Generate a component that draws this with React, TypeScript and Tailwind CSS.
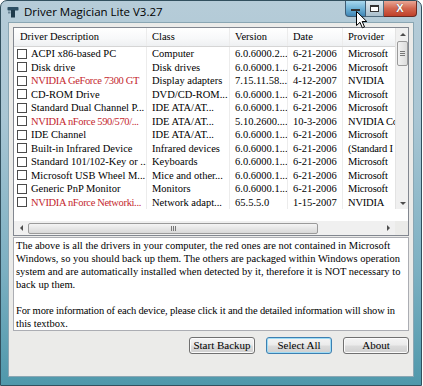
import { FC } from "react";

interface Driver {
  d: string;
  c: string;
  v: string;
  t: string;
  p: string;
  red?: boolean;
}

const drivers: Driver[] = [
  { d: "ACPI x86-based PC", c: "Computer", v: "6.0.6000.2...", t: "6-21-2006", p: "Microsoft" },
  { d: "Disk drive", c: "Disk drives", v: "6.0.6000.1...", t: "6-21-2006", p: "Microsoft" },
  { d: "NVIDIA GeForce 7300 GT", c: "Display adapters", v: "7.15.11.58...", t: "4-12-2007", p: "NVIDIA", red: true },
  { d: "CD-ROM Drive", c: "DVD/CD-ROM...", v: "6.0.6000.1...", t: "6-21-2006", p: "Microsoft" },
  { d: "Standard Dual Channel P...", c: "IDE ATA/AT...", v: "6.0.6000.1...", t: "6-21-2006", p: "Microsoft" },
  { d: "NVIDIA nForce 590/570/...", c: "IDE ATA/AT...", v: "5.10.2600....", t: "10-3-2006", p: "NVIDIA Co", red: true },
  { d: "IDE Channel", c: "IDE ATA/AT...", v: "6.0.6000.1...", t: "6-21-2006", p: "Microsoft" },
  { d: "Built-in Infrared Device", c: "Infrared devices", v: "6.0.6000.1...", t: "6-21-2006", p: "(Standard I" },
  { d: "Standard 101/102-Key or ...", c: "Keyboards", v: "6.0.6000.1...", t: "6-21-2006", p: "Microsoft" },
  { d: "Microsoft USB Wheel M...", c: "Mice and other...", v: "6.0.6000.1...", t: "6-21-2006", p: "Microsoft" },
  { d: "Generic PnP Monitor", c: "Monitors", v: "6.0.6000.1...", t: "6-21-2006", p: "Microsoft" },
  { d: "NVIDIA nForce Networki...", c: "Network adapt...", v: "65.5.5.0", t: "1-15-2007", p: "NVIDIA", red: true },
];

const Cell: FC<{ w: string; children: React.ReactNode; className?: string }> = ({ w, children, className }) => (
  <div className={`${w} shrink-0 overflow-hidden whitespace-nowrap border-r border-[#ececec] pl-[5px] ${className ?? ""}`}>
    {children}
  </div>
);

const Btn: FC<{ label: string; focused?: boolean }> = ({ label, focused }) => (
  <button
    className={`h-[17px] w-[66px] rounded-[3px] border bg-[linear-gradient(180deg,#f4f4f4_0%,#ebebeb_48%,#dcdcdc_52%,#cfcfcf_100%)] text-[11px] leading-none text-black ${
      focused ? "border-[#3c7fb1] shadow-[inset_0_0_0_1px_#9fdcf5]" : "border-[#707070] shadow-[inset_0_0_0_1px_#fbfbfb]"
    }`}
  >
    {label}
  </button>
);

const ScrollArrow: FC<{ dir: "up" | "down" | "left" | "right" }> = ({ dir }) => {
  const pts = {
    up: "2,6 5,3 8,6",
    down: "2,4 5,7 8,4",
    left: "6,2 3,5 6,8",
    right: "4,2 7,5 4,8",
  }[dir];
  return (
    <div className="flex h-[13px] w-[13px] shrink-0 items-center justify-center">
      <svg width="10" height="10" viewBox="0 0 10 10">
        <polygon points={pts} fill="#4d4d4d" />
      </svg>
    </div>
  );
};

export default function App() {
  return (
    <div className="relative h-[386px] w-[423px] overflow-hidden bg-white font-['Liberation_Serif',serif]">
      <div className="flex h-[386px] w-[422px] flex-col rounded-t-[7px] border border-[#32505e] bg-[linear-gradient(180deg,#b6ccd8_0%,#a9c6d4_30%,#7cb0c2_70%,#4f98ab_100%)]">
        {/* title bar */}
        <div className="relative flex h-[21px] shrink-0 items-center pl-[6px]">
          <svg width="12" height="12" viewBox="0 0 12 12" className="mr-[5px]">
            <rect x="0.5" y="1" width="11" height="3.5" rx="0.8" fill="#2c4f63" />
            <rect x="4" y="4" width="4" height="7.5" fill="#1f3b4b" />
            <rect x="1" y="5.5" width="2.5" height="2" fill="#6c8797" />
          </svg>
          <span className="font-['Open_Sans',sans-serif] text-[11.5px] leading-none text-black">
            Driver Magician Lite V3.27
          </span>
          <div className="ml-auto mr-[4px] flex self-start">
            <div className="flex h-[16px] w-[21px] items-center justify-center rounded-bl-[4px] border border-t-0 border-[#3e5c74] bg-[linear-gradient(180deg,#a9d8ee_0%,#6fb2d6_50%,#3f86b6_100%)]">
              <div className="mt-[3px] h-[2px] w-[9px] border border-[#333] bg-white" />
            </div>
            <div className="flex h-[16px] w-[18px] items-center justify-center border-y border-r border-t-0 border-[#4e6a7c] bg-[linear-gradient(180deg,#dfe9ef_0%,#c2d3dd_50%,#aabfcc_100%)]">
              <div className="h-[7px] w-[9px] border border-[#333] border-t-2 bg-white" />
            </div>
            <div className="flex h-[16px] w-[33px] items-center justify-center rounded-br-[4px] border border-t-0 border-l-0 border-[#6b2a22] bg-[linear-gradient(180deg,#e9a795_0%,#d2664f_50%,#c0402a_100%)]">
              <span className="font-['Liberation_Sans',sans-serif] text-[11px] font-bold leading-none text-white [text-shadow:0_0_1px_#333]">
                X
              </span>
            </div>
          </div>
          {/* mouse cursor */}
          <svg width="12" height="18" viewBox="0 0 12 18" className="absolute left-[355px] top-[10px]">
            <path d="M0.5 0.5 L0.5 14.5 L4 11.3 L6.3 16.8 L8.5 15.9 L6.2 10.5 L10.8 10.5 Z" fill="white" stroke="black" strokeWidth="1" />
          </svg>
        </div>

        {/* client area */}
        <div className="mx-[7px] mb-[8px] flex flex-1 flex-col border border-[#8aa6b3] bg-[#ebebe9] px-[4px] pt-[4px]">
          {/* list view */}
          <div className="flex h-[209px] shrink-0 flex-col border border-[#828790] bg-white text-[10.5px] text-black">
            <div className="flex h-[181px] shrink-0">
              <div className="flex flex-1 flex-col overflow-hidden">
                <div className="flex h-[19px] shrink-0 items-center border-b border-[#d5d5d5] bg-[linear-gradient(180deg,#ffffff_0%,#f7f8f9_60%,#eef0f2_100%)] leading-[18px]">
                  <Cell w="w-[133px]" className="border-[#c9c9c9] pl-[6px]">Driver Description</Cell>
                  <Cell w="w-[83px]" className="border-[#c9c9c9]">Class</Cell>
                  <Cell w="w-[58px]" className="border-[#c9c9c9]">Version</Cell>
                  <Cell w="w-[55px]" className="border-[#c9c9c9]">Date</Cell>
                  <Cell w="w-[55px]" className="border-[#c9c9c9]">Provider</Cell>
                </div>
                {drivers.map((r) => (
                  <div key={r.d} className="flex h-[13.5px] shrink-0 items-center leading-[13.5px]">
                    <div className="flex w-[133px] shrink-0 items-center overflow-hidden whitespace-nowrap border-r border-[#ececec] pl-[3px]">
                      <div className="mr-[4px] h-[10px] w-[10px] shrink-0 border border-[#4a4a4a] bg-white" />
                      <span className={r.red ? "tracking-[-0.35px] text-[#c4272e]" : ""}>{r.d}</span>
                    </div>
                    <Cell w="w-[83px]">{r.c}</Cell>
                    <Cell w="w-[58px]">{r.v}</Cell>
                    <Cell w="w-[55px]">{r.t}</Cell>
                    <Cell w="w-[55px]" className="tracking-[-0.2px]">{r.p}</Cell>
                  </div>
                ))}
              </div>
              {/* vertical scrollbar */}
              <div className="flex w-[13px] shrink-0 flex-col border-l border-[#e3e3e3] bg-[#f0f0f0]">
                <ScrollArrow dir="up" />
                <div className="mx-auto flex h-[25px] w-[11px] flex-col items-center justify-center gap-[1px] rounded-[2px] border border-[#9a9a9a] bg-[linear-gradient(90deg,#f2f2f2,#dcdcdc)]">
                  <div className="h-px w-[5px] bg-[#777]" />
                  <div className="h-px w-[5px] bg-[#777]" />
                  <div className="h-px w-[5px] bg-[#777]" />
                </div>
                <div className="flex-1" />
                <ScrollArrow dir="down" />
              </div>
            </div>
            <div className="flex-1" />
            {/* horizontal scrollbar */}
            <div className="flex h-[14px] shrink-0">
              <div className="flex flex-1 items-center bg-[#f0f0f0] px-[1px]">
                <ScrollArrow dir="left" />
                <div className="flex h-[11px] w-[290px] items-center justify-center gap-[1px] rounded-[2px] border border-[#9a9a9a] bg-[linear-gradient(180deg,#f4f4f4,#d8d8d8)]">
                  <div className="h-[5px] w-px bg-[#777]" />
                  <div className="h-[5px] w-px bg-[#777]" />
                  <div className="h-[5px] w-px bg-[#777]" />
                </div>
                <div className="flex-1" />
                <ScrollArrow dir="right" />
              </div>
              <div className="w-[13px] shrink-0 bg-[#ebebe9]" />
            </div>
          </div>

          {/* info text box */}
          <div className="mt-[1px] h-[94px] shrink-0 whitespace-nowrap border border-[#abadb3] bg-white px-[2px] pt-[1px] text-[10.5px] leading-[13px] text-black">
            <p>
              The above is all the drivers in your computer, the red ones are not contained in Microsoft
              <br />
              Windows, so you should back up them. The others are packaged within Windows operation
              <br />
              system and are automatically installed when detected by it, therefore it is NOT necessary to
              <br />
              back up them.
            </p>
            <p className="mt-[13px]">
              <span className="tracking-[-0.15px]">
                For more information of each device, please click it and the detailed information will show in
              </span>
              <br />
              this textbox.
            </p>
          </div>

          {/* buttons */}
          <div className="mt-[6px] flex justify-end gap-[11px]">
            <Btn label="Start Backup" />
            <Btn label="Select All" focused />
            <Btn label="About" />
          </div>
        </div>
      </div>
    </div>
  );
}
